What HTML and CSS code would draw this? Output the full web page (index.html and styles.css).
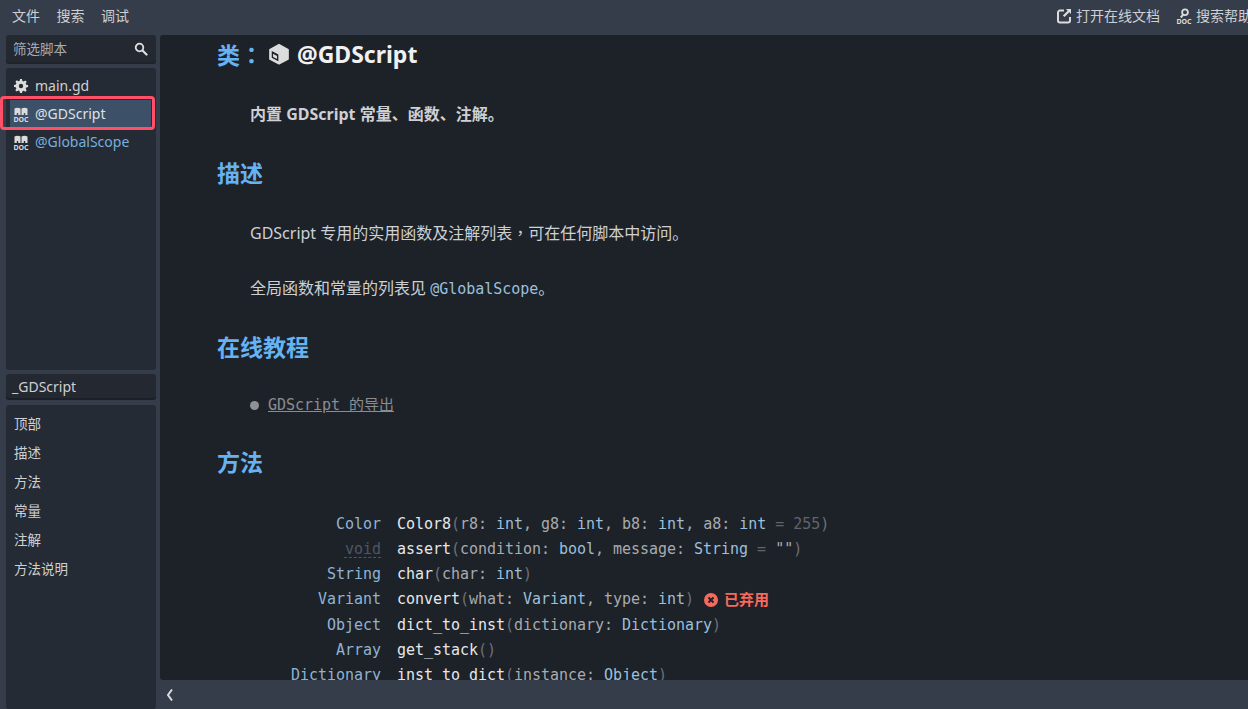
FILE: index.html
```html
<!DOCTYPE html>
<html lang="zh">
<head>
<meta charset="utf-8">
<title>@GDScript</title>
<link rel="stylesheet" href="styles.css">
</head>
<body>
<header class="topbar">
  <nav class="menu"><span>文件</span><span>搜索</span><span>调试</span></nav>
  <div class="tools">
    <span class="tool">
      <svg class="ic" viewBox="0 0 16 16"><path d="M8 2.500H4a2 2 0 0 0-2 2v8a2 2 0 0 0 2 2h8a2 2 0 0 0 2-2V9" fill="none" stroke="#dcdcdc" stroke-width="2"/><path d="M10 1h5v5l-1.700-1.700-4.800 4.800-1.600-1.600 4.800-4.800z" fill="#dcdcdc"/></svg>
      打开在线文档
    </span>
    <span class="tool">
      <svg class="ic" viewBox="0 0 16 16"><circle cx="9" cy="4.300" r="2.900" fill="none" stroke="#dcdcdc" stroke-width="1.800"/><path d="M7 6.800 4.800 9.500" stroke="#dcdcdc" stroke-width="2"/><text x="8" y="15.500" text-anchor="middle" class="doctext">DOC</text></svg>
      搜索帮助
    </span>
  </div>
</header>
<div class="main">
  <aside class="side">
    <div class="panel filter">
      <span>筛选脚本</span>
      <svg class="search" viewBox="0 0 14 14"><circle cx="5.500" cy="5.500" r="3.800" fill="none" stroke="#e0e0e0" stroke-width="1.800"/><path d="M8.500 8.500l4 4" stroke="#e0e0e0" stroke-width="2.200" stroke-linecap="round"/></svg>
    </div>
    <div class="panel scripts">
      <div class="row">
        <svg class="ic" viewBox="0 0 16 16"><path d="M7 1h2l.4 1.900 1.300.5 1.600-1 1.400 1.400-1 1.600.5 1.300 1.900.4v2l-1.900.4-.5 1.300 1 1.600-1.400 1.400-1.600-1-1.300.5L9 15H7l-.4-1.900-1.300-.5-1.600 1-1.400-1.400 1-1.600-.5-1.300L1 9V7l1.900-.4.500-1.300-1-1.600 1.400-1.400 1.600 1 1.300-.5z" fill="#dcdcdc"/><circle cx="8" cy="8" r="2.200" fill="#252b34"/></svg>
        main.gd
      </div>
      <div class="row selected">
        <svg class="ic" viewBox="0 0 16 16"><path d="M1.500 9V2.500C3.500 1.500 5.500 1.500 7.500 2.500V9zM8.500 9V2.500c2-1 4-1 6 0V9z" fill="#dcdcdc"/><path d="M3.800 9V7h1.400v2zM10.800 9V7h1.400v2z" fill="#3c5068"/><text x="8" y="15.500" text-anchor="middle" class="doctext">DOC</text></svg>
        @GDScript
      </div>
      <div class="row link">
        <svg class="ic" viewBox="0 0 16 16"><path d="M1.500 9V2.500C3.500 1.500 5.500 1.500 7.500 2.500V9zM8.500 9V2.500c2-1 4-1 6 0V9z" fill="#dcdcdc"/><path d="M3.800 9V7h1.400v2zM10.800 9V7h1.400v2z" fill="#252b34"/><text x="8" y="15.500" text-anchor="middle" class="doctext">DOC</text></svg>
        @GlobalScope
      </div>
      <div class="highlight"></div>
    </div>
    <div class="panel classname">_GDScript</div>
    <div class="panel outline">
      <div>顶部</div><div>描述</div><div>方法</div><div>常量</div><div>注解</div><div>方法说明</div>
    </div>
  </aside>
  <section class="docpane">
    <div class="doc">
      <h1><span class="h">类<span class="tc" lang="zh-TW">：</span></span><svg class="cube" viewBox="0 0 20 20"><path d="M10 1.500 18.200 6v8.500L10 18.800 1.800 14.500V6z" fill="#dcdcdc" stroke="#dcdcdc" stroke-width="1.500" stroke-linejoin="round"/><path d="M4 8.200 8.800 10.800V15.500L4 13z" fill="none" stroke="#1d2229" stroke-width="1.200"/><path d="M4 8.200 8.800 10.800V12L4 9.600z" fill="#1d2229"/></svg><span class="title">@GDScript</span></h1>
      <p class="lead">内置 GDScript 常量、函数、注解。</p>
      <h2 class="h2a">描述</h2>
      <p class="p1">GDScript 专用的实用函数及注解列表<span class="tc" lang="zh-TW">，</span>可在任何脚本中访问。</p>
      <p class="p2">全局函数和常量的列表见 <code class="ref">@GlobalScope</code>。</p>
      <h2 class="h2b">在线教程</h2>
      <div class="tut"><i class="dot"></i><code class="tlink">GDScript 的导出</code></div>
      <h2 class="h2c">方法</h2>
      <div class="methods">
        <code class="t">Color</code><code class="m"><b>Color8</b>(<em>r8: </em><s>int</s><em>, g8: </em><s>int</s><em>, b8: </em><s>int</s><em>, a8: </em><s>int</s> <u>= 255</u>)</code>
        <code class="t void">void</code><code class="m"><b>assert</b>(<em>condition: </em><s>bool</s><em>, message: </em><s>String</s> <u>=</u> <em>""</em>)</code>
        <code class="t">String</code><code class="m"><b>char</b>(<em>char: </em><s>int</s>)</code>
        <code class="t">Variant</code><code class="m"><b>convert</b>(<em>what: </em><s>Variant</s><em>, type: </em><s>int</s>) <span class="dep"><svg class="x" viewBox="0 0 14 14"><circle cx="7" cy="7" r="7" fill="#f7695c"/><path d="M4.500 4.500l5 5m0-5l-5 5" stroke="#1d2229" stroke-width="2"/></svg>已弃用</span></code>
        <code class="t">Object</code><code class="m"><b>dict_to_inst</b>(<em>dictionary: </em><s>Dictionary</s>)</code>
        <code class="t">Array</code><code class="m"><b>get_stack</b>()</code>
        <code class="t">Dictionary</code><code class="m"><b>inst_to_dict</b>(<em>instance: </em><s>Object</s>)</code>
      </div>
    </div>
    <div class="bottom">
      <svg class="chev" viewBox="0 0 8 14"><path d="M6 1.500 2 7l4 5.500" fill="none" stroke="#dcdcdc" stroke-width="2"/></svg>
    </div>
  </section>
</div>
</body>
</html>
```
FILE: styles.css
```css
* { box-sizing: border-box; }
html, body { margin: 0; height: 100%; overflow: hidden; }
body {
  background: #363d4a;
  color: #cfd0d3;
  font: 14px/20px "Noto Sans", "Noto Sans CJK SC", sans-serif;
  width: 1248px;
  height: 709px;
  display: flex;
  flex-direction: column;
}
.doctext { font: 700 7px "Noto Sans", sans-serif; fill: #dcdcdc; }
.tc { font-family: "Noto Sans CJK TC", sans-serif; }
.topbar { height: 35px; flex: none; display: flex; justify-content: space-between; align-items: center; padding-left: 12px; overflow: hidden; }
.menu { display: flex; gap: 16.500px; font-size: 14px; margin-top: -3px; }
.tools { display: flex; gap: 16px; margin-right: -4px; margin-top: -3px; white-space: nowrap; }
.tool { display: flex; align-items: center; gap: 4px; }
.ic { width: 16px; height: 16px; flex: none; }
.main { flex: 1; display: flex; min-height: 0; padding-left: 6px; }
.side { width: 150px; flex: none; display: flex; flex-direction: column; }
.panel { background: #252b34; border-radius: 3px; }
.filter { height: 29px; flex: none; background: #232831; box-shadow: inset 0 -2px 0 #1f242b; display: flex; justify-content: space-between; align-items: center; padding: 0 8px 2px 7px; color: #a9acb1; font-size: 13.500px; }
.search { width: 14px; height: 14px; }
.scripts { position: relative; height: 302px; flex: none; margin-top: 4px; padding-top: 4px; }
.row { height: 28px; margin: 0 5px 0 4px; padding-left: 3px; display: flex; align-items: center; gap: 6px; }
.selected { background: #3c5068; color: #dfe1e4; }
.link { color: #77aedc; }
.highlight { position: absolute; left: -6px; top: 28px; width: 155px; height: 34px; border: 3px solid #ff5068; border-radius: 4px; }
.classname { height: 26px; flex: none; margin-top: 4px; padding-left: 6px; line-height: 26px; background: #232831; box-shadow: inset 0 -2px 0 #1c2026; }
.outline { flex: 1; margin-top: 5px; padding: 5px 0 0 8px; }
.outline div { height: 29px; line-height: 29px; font-size: 13.500px; }
.docpane { flex: 1; margin-left: 4px; display: flex; flex-direction: column; min-width: 0; }
.doc { flex: 1; min-height: 0; overflow: hidden; background: #1d2229; border-radius: 3px 0 0 3px; padding-left: 58px; }
.bottom { height: 29px; flex: none; display: flex; align-items: center; padding-left: 6px; }
.chev { width: 8px; height: 14px; }
h1, h2, p { margin: 0; }
h1 { height: 36px; display: flex; align-items: center; font-size: 23px; font-weight: 700; margin-top: 1px; margin-left: -1px; }
.h { color: #66b2f2; }
.cube { width: 22px; height: 22px; margin: 0 7px 0 5px; }
.title { color: #f0f0f0; }
h2 { color: #66b2f2; font-size: 23px; line-height: 32px; font-weight: 700; margin-left: -1px; }
p { font-size: 16px; line-height: 24px; padding-left: 32px; }
.lead { font-weight: 700; margin-top: 30px; }
.h2a { margin-top: 31px; }
.p1 { margin-top: 31px; }
.p2 { margin-top: 31px; }
.h2b { margin-top: 29px; }
code { font: 15px/25px "DejaVu Sans Mono", "Noto Sans CJK SC", monospace; letter-spacing: -.03px; }
.ref { color: #9cbfdb; }
.tut { display: flex; align-items: center; margin-top: 30px; padding-left: 32px; height: 25px; }
.dot { width: 9px; height: 9px; border-radius: 50%; background: #8f9195; margin-right: 9px; }
.tlink { color: #8b8d91; text-decoration: underline; }
.h2c { margin-top: 28px; }
.methods { display: grid; grid-template-columns: 163px auto; justify-content: start; column-gap: 16px; margin-top: 34px; grid-auto-rows: 25.170px; }
.t { color: #8fb3d3; text-align: right; }
.void { color: #4e5663; text-decoration: underline dashed 1px; text-underline-offset: 3px; }
.m { color: #6c7077; white-space: nowrap; }
.m b { color: #e6e7e9; font-weight: 400; }
.m em { color: #a9abae; font-style: normal; }
.m s { color: #9cbfdb; text-decoration: none; }
.m u { color: #60646c; text-decoration: none; }
.dep { color: #f7695c; font: 700 15px/25px "Noto Sans", "Noto Sans CJK SC", sans-serif; display: inline-flex; align-items: center; gap: 6px; margin-left: 1px; vertical-align: top; }
.x { width: 14px; height: 14px; }
```
